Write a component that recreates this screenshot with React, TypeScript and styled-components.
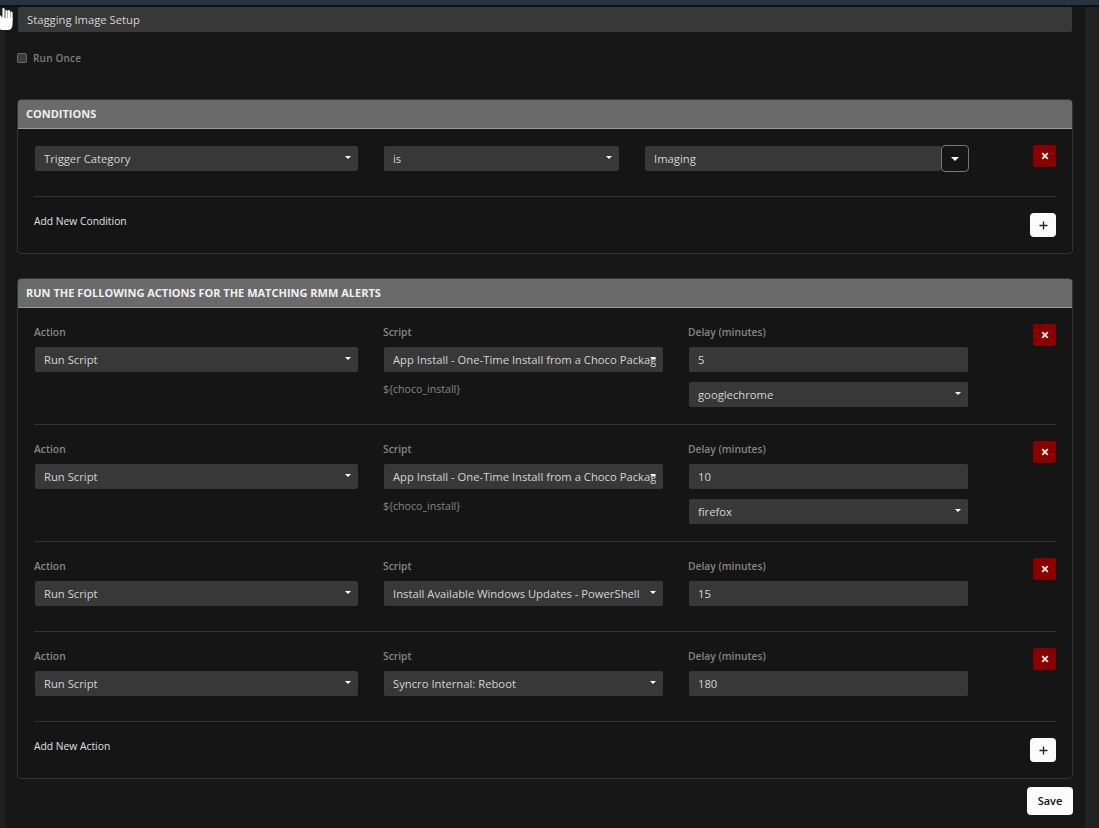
import styled, { createGlobalStyle } from "styled-components";

const GlobalStyle = createGlobalStyle`
  html, body {
    margin: 0;
    padding: 0;
    height: 100%;
    overflow: hidden;
    background: #222222;
    font-family: "Open Sans", "Liberation Sans", sans-serif;
  }
`;

const ACTIONS = [
  { script: "App Install - One-Time Install from a Choco Package", delay: "5", variable: "${choco_install}", pkg: "googlechrome" },
  { script: "App Install - One-Time Install from a Choco Package", delay: "10", variable: "${choco_install}", pkg: "firefox" },
  { script: "Install Available Windows Updates - PowerShell", delay: "15" },
  { script: "Syncro Internal: Reboot", delay: "180" },
];

const Page = styled.div`
  position: relative;
  width: 1099px;
  height: 828px;
  overflow: hidden;
  display: flex;
  flex-direction: column;
`;

const TopBar = styled.div`
  height: 5px;
  flex: none;
  background: #27343f;
  border-bottom: 2px solid #101010;
`;

const Columns = styled.div`
  flex: 1;
  display: flex;
  min-height: 0;
`;

const Rail = styled.div`
  width: 5px;
  flex: none;
  background: #1f1f1f;
`;

const Content = styled.main`
  width: 1080px;
  flex: none;
  box-sizing: border-box;
  background: #171717;
  padding: 0 13px 0 12px;
`;

const NameInput = styled.div`
  height: 25px;
  margin-left: 1px;
  box-sizing: border-box;
  background: #383838;
  border-radius: 2px;
  color: #d6d6d6;
  font-size: 11.25px;
  line-height: 25px;
  padding-left: 9px;
`;

const CheckRow = styled.label`
  display: flex;
  align-items: center;
  gap: 6px;
  margin-top: 19px;
  height: 14px;
  color: #7d7d7d;
  font-size: 10px;
  font-weight: 600;
  letter-spacing: 0.2px;
`;

const CheckBox = styled.span`
  width: 8px;
  height: 8px;
  border: 1px solid #6a6a6a;
  border-radius: 2px;
  background: #3d3d3d;
`;

const Panel = styled.section<{ $gap: number }>`
  margin-top: ${(p) => p.$gap}px;
  box-sizing: border-box;
  width: 1056px;
  border: 1px solid #333333;
  border-radius: 4px;
  background: #151515;
`;

const PanelHeader = styled.h3`
  margin: 0;
  height: 29px;
  box-sizing: border-box;
  background: #6a6a6a;
  border-bottom: 1px solid #999999;
  border-radius: 3px 3px 0 0;
  padding-left: 8px;
  color: #f0f0f0;
  font-size: 11px;
  font-weight: 700;
  line-height: 28px;
  text-transform: uppercase;
`;

const PanelBody = styled.div`
  padding: 0 16px;
`;

const ConditionRow = styled.div`
  display: flex;
  align-items: flex-start;
  height: 68px;
  box-sizing: border-box;
  padding-top: 17px;
  border-bottom: 1px solid #333333;
`;

const ActionRow = styled.div<{ $height: number }>`
  display: grid;
  grid-template-columns: 324px 280px 280px 1fr;
  column-gap: 25px;
  height: ${(p) => p.$height}px;
  box-sizing: border-box;
  padding-top: 17px;
  border-bottom: 1px solid #333333;
`;

const Field = styled.div`
  display: flex;
  flex-direction: column;
  min-width: 0;
`;

const FieldLabel = styled.div`
  height: 15px;
  margin-bottom: 7px;
  color: #858585;
  font-size: 10.3px;
  font-weight: 600;
  line-height: 15px;
`;

const Control = styled.div<{ $width?: number; $left?: number }>`
  position: relative;
  width: ${(p) => (p.$width ? `${p.$width}px` : "auto")};
  margin-left: ${(p) => p.$left ?? 1}px;
  height: 25px;
  flex: none;
  box-sizing: border-box;
  background: #383838;
  border-radius: 2px;
  color: #d4d4d4;
  font-size: 11.25px;
  line-height: 25px;
  padding: 0 7px 0 9px;
`;

const ControlText = styled.span`
  display: block;
  white-space: nowrap;
  overflow: hidden;
`;

const Caret = styled.span`
  position: absolute;
  right: 7px;
  top: 10px;
  width: 0;
  height: 0;
  border-left: 3px solid transparent;
  border-right: 3px solid transparent;
  border-top: 3.5px solid #ffffff;
`;

const Note = styled.div`
  margin-top: 10px;
  height: 15px;
  color: #858585;
  font-size: 10.6px;
  line-height: 15px;
`;

const SubControl = styled.div`
  margin-top: 10px;
`;

const CaretButton = styled.div`
  width: 28px;
  height: 27px;
  margin-top: -1px;
  flex: none;
  box-sizing: border-box;
  border: 1px solid #777777;
  border-radius: 4px;
  background: #151515;
  display: flex;
  align-items: center;
  justify-content: center;

  &::before {
    content: "";
    border-left: 4px solid transparent;
    border-right: 4px solid transparent;
    border-top: 4.5px solid #ffffff;
  }
`;

const RemoveButton = styled.div`
  width: 23px;
  height: 22px;
  flex: none;
  margin-left: auto;
  justify-self: end;
  margin-top: -1px;
  background: #880000;
  border-radius: 2px;
  display: flex;
  align-items: center;
  justify-content: center;
`;

const AddRow = styled.div`
  height: 56px;
  display: flex;
  justify-content: space-between;
  align-items: flex-start;
  padding-top: 16px;
  box-sizing: border-box;
  color: #e0e0e0;
  font-size: 10.3px;
`;

const AddLabel = styled.span`
  line-height: 16px;
`;

const AddButton = styled.div`
  width: 26px;
  height: 24px;
  background: #fbfbfb;
  border-radius: 4px;
  display: flex;
  align-items: center;
  justify-content: center;
`;

const Footer = styled.div`
  width: 1056px;
  display: flex;
  justify-content: flex-end;
  margin-top: 8px;
`;

const SaveButton = styled.div`
  width: 46px;
  height: 28px;
  background: #fbfbfb;
  border-radius: 4px;
  color: #111111;
  font-size: 11px;
  font-weight: 600;
  line-height: 28px;
  text-align: center;
`;

const Pointer = styled.svg`
  position: absolute;
  left: 0;
  top: 0;
`;

const XIcon = () => (
  <svg width="8" height="8" viewBox="0 0 8 8">
    <path d="M1.2 1.2 6.8 6.8M6.8 1.2 1.2 6.8" stroke="#f4e6e6" strokeWidth="1.9" />
  </svg>
);

const PlusIcon = () => (
  <svg width="9" height="9" viewBox="0 0 9 9">
    <path d="M4.5 0.5v8M0.5 4.5h8" stroke="#222222" strokeWidth="1.3" />
  </svg>
);

function Select({ value, width, left }: { value: string; width?: number; left?: number }) {
  return (
    <Control $width={width} $left={left}>
      <ControlText>{value}</ControlText>
      <Caret />
    </Control>
  );
}

export default function App() {
  return (
    <Page>
      <GlobalStyle />
      <TopBar />
      <Columns>
        <Rail />
        <Content>
          <NameInput>Stagging Image Setup</NameInput>
          <CheckRow>
            <CheckBox />
            Run Once
          </CheckRow>

          <Panel $gap={34}>
            <PanelHeader>Conditions</PanelHeader>
            <PanelBody>
              <ConditionRow>
                <Select value="Trigger Category" width={323} />
                <Select value="is" width={235} left={26} />
                <Control $width={296} $left={26}>Imaging</Control>
                <CaretButton />
                <RemoveButton><XIcon /></RemoveButton>
              </ConditionRow>
              <AddRow>
                <AddLabel>Add New Condition</AddLabel>
                <AddButton><PlusIcon /></AddButton>
              </AddRow>
            </PanelBody>
          </Panel>

          <Panel $gap={24}>
            <PanelHeader>Run the following actions for the matching RMM alerts</PanelHeader>
            <PanelBody>
              {ACTIONS.map((action, i) => (
                <ActionRow key={i} $height={action.pkg ? 117 : 90}>
                  <Field>
                    <FieldLabel>Action</FieldLabel>
                    <Select value="Run Script" width={323} />
                  </Field>
                  <Field>
                    <FieldLabel>Script</FieldLabel>
                    <Select value={action.script} />
                    {action.variable && <Note>{action.variable}</Note>}
                  </Field>
                  <Field>
                    <FieldLabel>Delay (minutes)</FieldLabel>
                    <Control>{action.delay}</Control>
                    {action.pkg && (
                      <SubControl>
                        <Select value={action.pkg} />
                      </SubControl>
                    )}
                  </Field>
                  <RemoveButton><XIcon /></RemoveButton>
                </ActionRow>
              ))}
              <AddRow>
                <AddLabel>Add New Action</AddLabel>
                <AddButton><PlusIcon /></AddButton>
              </AddRow>
            </PanelBody>
          </Panel>

          <Footer>
            <SaveButton>Save</SaveButton>
          </Footer>
        </Content>
      </Columns>
      <Pointer width="16" height="32" viewBox="0 0 16 32">
        <path d="M3.5 9v10M6.5 11v8M9 11v8M11.5 12.5v7" stroke="#ffffff" strokeWidth="2.2" strokeLinecap="round" />
        <path d="M0 15 3 18 H12.6 V24 Q12.6 29 9 30 H2 Q0 30 0 29Z" fill="#ffffff" />
      </Pointer>
    </Page>
  );
}
